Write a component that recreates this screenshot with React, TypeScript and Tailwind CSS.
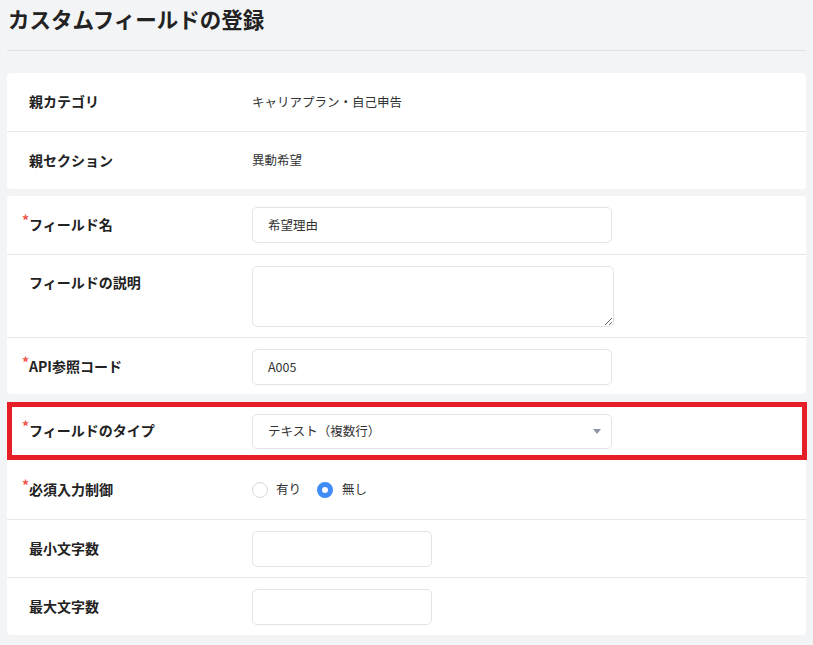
import React from "react";

const Label = ({ text, required }: { text: string; required?: boolean }) => (
  <div className="w-[245px] shrink-0 pl-[22px]">
    <span className="relative -top-[2px] text-[14px] font-bold text-[#222]">
      {required && (
        <span className="absolute -left-[7px] -top-[4px] text-[14px] font-bold leading-[20px] text-[#f0524a]">*</span>
      )}
      {text}
    </span>
  </div>
);

export default function App() {
  return (
    <div className="min-h-screen bg-[#f3f4f6] px-[7px] pb-4 font-['Noto_Sans_CJK_JP','Noto_Sans',sans-serif] text-[#333]">
      <h1 className="h-[50px] pl-px pt-[2px] text-[21.5px] font-bold leading-[34px] text-[#222]">
        カスタムフィールドの登録
      </h1>
      <div className="h-px bg-[#dfe1e4]" />

      <div className="mt-[22px] rounded bg-white">
        <div className="flex h-[59px] items-center border-b border-[#e4e7eb]">
          <Label text="親カテゴリ" />
          <span className="text-[12.5px]">キャリアプラン・自己申告</span>
        </div>
        <div className="flex h-[57px] items-center">
          <Label text="親セクション" />
          <span className="text-[12.5px]">異動希望</span>
        </div>
      </div>

      <div className="mt-[7px] rounded bg-white">
        <div className="flex items-center border-b border-[#e4e7eb] py-[11px]">
          <Label text="フィールド名" required />
          <div className="flex h-[36px] w-[360px] items-center rounded-[5px] border border-[#e1e3e7] pl-[15px] text-[12.5px]">
            希望理由
          </div>
        </div>
        <div className="flex items-start border-b border-[#e4e7eb] pb-[10px] pt-[11px]">
          <div className="pt-[5px]">
            <Label text="フィールドの説明" />
          </div>
          <textarea className="h-[61px] w-[362px] rounded-[5px] border border-[#e1e3e7] outline-none" />
        </div>
        <div className="flex items-center pb-[9px] pt-[11px]">
          <Label text="API参照コード" required />
          <div className="flex h-[36px] w-[360px] items-center rounded-[5px] border border-[#e1e3e7] pl-[15px] text-[12.5px]">
            A005
          </div>
        </div>
      </div>

      <div className="mt-[8px] rounded bg-white">
        <div className="relative flex h-[58px] items-center">
          <Label text="フィールドのタイプ" required />
          <div className="flex h-[35px] w-[360px] items-center justify-between rounded-[5px] border border-[#e1e3e7] pl-[15px] pr-[10px] text-[12.5px]">
            <span>テキスト（複数行）</span>
            <span className="h-0 w-0 border-x-[4px] border-t-[5px] border-x-transparent border-t-[#8c96a5]" />
          </div>
          <div className="pointer-events-none absolute -right-px bottom-0 left-0 top-0 border-[5px] border-[#e61e25]" />
        </div>
        <div className="flex h-[60px] items-center border-b border-[#e4e7eb]">
          <Label text="必須入力制御" required />
          <div className="flex items-center text-[12.5px]">
            <span className="h-[16px] w-[16px] rounded-full border border-[#d9dbe0] bg-white" />
            <span className="ml-[8px]">有り</span>
            <span className="ml-[16px] h-[16px] w-[16px] rounded-full border-[5px] border-[#3f8cf6] bg-white" />
            <span className="ml-[9px]">無し</span>
          </div>
        </div>
        <div className="flex h-[58px] items-center border-b border-[#e4e7eb]">
          <Label text="最小文字数" />
          <div className="h-[36px] w-[180px] rounded-[5px] border border-[#e1e3e7]" />
        </div>
        <div className="flex h-[57px] items-center">
          <Label text="最大文字数" />
          <div className="h-[36px] w-[180px] rounded-[5px] border border-[#e1e3e7]" />
        </div>
      </div>
    </div>
  );
}
